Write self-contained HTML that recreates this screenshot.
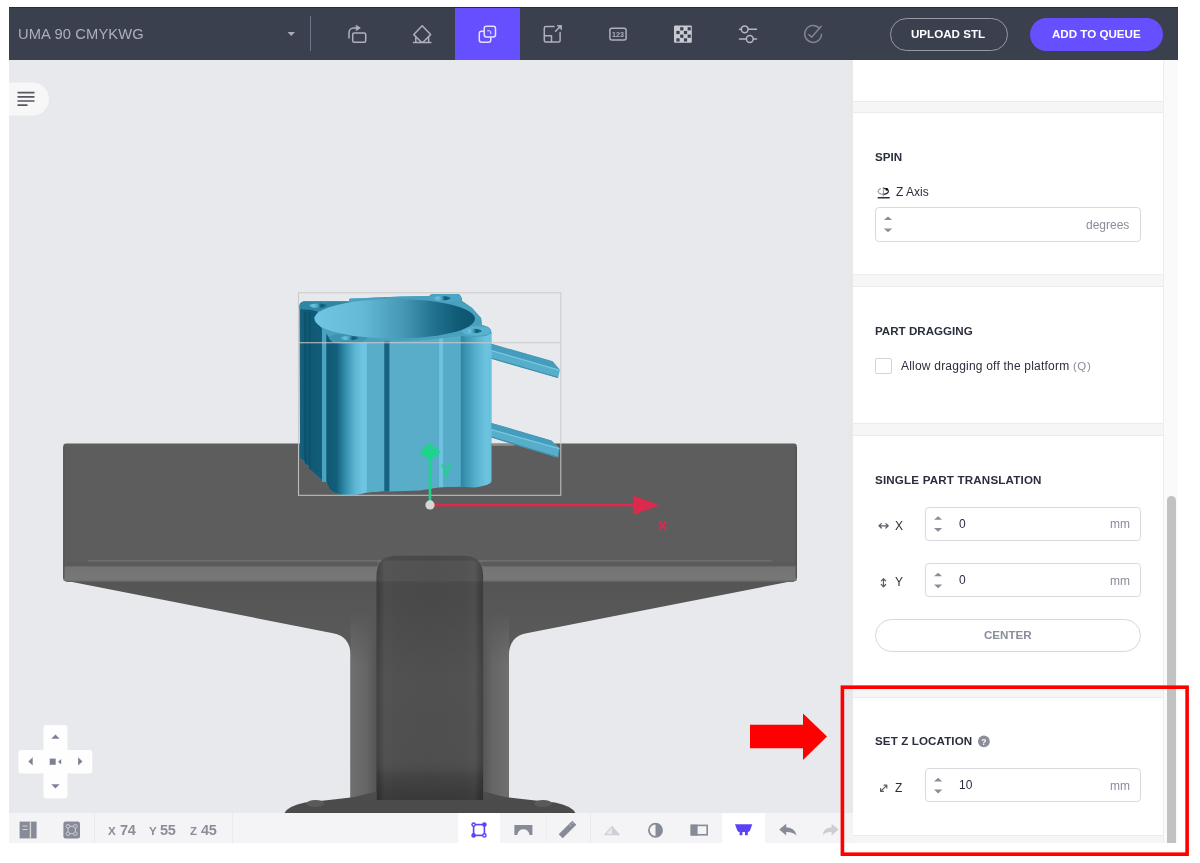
<!DOCTYPE html>
<html><head><meta charset="utf-8">
<style>
*{box-sizing:border-box;margin:0;padding:0}
html,body{width:1200px;height:863px;background:#fff;overflow:hidden}
body{position:relative;font-family:"Liberation Sans",sans-serif;}
.abs{position:absolute}
#topbar{left:9px;top:7px;width:1168.5px;height:53.300px;background:#3b404e}
#viewport{left:9px;top:60px;width:844px;height:753px;background:#e8e9ed;overflow:hidden}
#panel{left:853px;top:60px;width:310px;height:783px;background:#fff;overflow:hidden}
#strack{left:1163px;top:60px;width:14.5px;height:783px;background:#fafafa;border-left:1px solid #ededed}
#sthumb{left:1167px;top:496px;width:8.5px;height:347px;background:#c2c2c2;border-radius:4.5px 4.5px 0 0}
#toolbar{left:9px;top:813px;width:844px;height:30px;background:#f4f4f6}
.gap{position:absolute;left:0;width:310px;background:#f6f6f7;border-top:1px solid #ebebed;border-bottom:1px solid #ebebed}
.h{position:absolute;left:22px;font-weight:bold;font-size:11.6px;color:#2b2f3d;white-space:nowrap;line-height:14px}
.t{position:absolute;font-size:12px;color:#2b2f3d;white-space:nowrap;line-height:14px}
.g{color:#8a8d9a}
.inp{position:absolute;border:1px solid #d9dadf;border-radius:4px;background:#fff}
.tt{position:absolute;white-space:nowrap;line-height:14px}
.tt,.t,.h{will-change:transform}
</style></head><body>
<div id="topbar" class="abs">
<div class="abs" style="left:0;top:0;width:1168.5px;height:1px;background:#2a2d3a"></div>
<div class="abs" style="left:446px;top:1px;width:65px;height:52px;background:#664fff"></div>
<div class="tt" id="title" style="left:8.500px;top:18.400px;font-size:14.700px;line-height:18px;color:#adb0bb;letter-spacing:0.140px">UMA 90 CMYKWG</div>
<div class="abs" style="left:300.5px;top:9px;width:1px;height:35px;background:#70748a"></div>
<div class="abs" style="left:881px;top:11px;width:118px;height:33px;border:1px solid #9699a6;border-radius:17px"></div>
<div class="tt" id="upl" style="left:902.300px;top:19.700px;font-size:11.6px;font-weight:bold;color:#fff">UPLOAD STL</div>
<div class="abs" style="left:1021px;top:11px;width:133px;height:33px;background:#664fff;border-radius:17px"></div>
<div class="tt" id="addq" style="left:1042.500px;top:19.700px;font-size:11.6px;font-weight:bold;color:#fff">ADD TO QUEUE</div>
</div>
<svg class="abs" style="left:0;top:0" width="1200" height="70" viewBox="0 0 1200 70" fill="none" stroke-linecap="round" stroke-linejoin="round">
<path d="M287.5 32h7.5l-3.75 4z" fill="#a9acb8"/>
<g stroke="#aeb1bc" stroke-width="1.5">
<rect x="352.7" y="32.9" width="13" height="9.4" rx="1.5"/>
<path d="M349 38v-5.5a4.6 4.600 0 0 1 4.600-4.600h3"/>
<path d="M356.500 25.400l3.800 2.500l-3.800 2.500z" fill="#aeb1bc" stroke-width="0.800"/>
<path d="M422.200 25.800l8.400 8.800l-7.600 7.600h-1.600l-7.600-7.600z"/>
<path d="M413.500 42.500h17.400M415.800 37.200v5M428.600 37.200v5"/>
</g>
<g stroke="#e6e2ff" stroke-width="1.5">
<rect x="479.300" y="31.200" width="11.500" height="11" rx="2.200"/>
<rect x="484.200" y="26.200" width="11.300" height="10.800" rx="2.200" fill="#664fff"/>
<path d="M487.500 30.800h2.200M490.700 31.600v2.200" stroke-width="1.100"/>
</g>
<g stroke="#aeb1bc" stroke-width="1.500">
<path d="M554 26.500h-8.200a1.500 1.500 0 0 0-1.500 1.500v12.500a1.500 1.500 0 0 0 1.500 1.500h12.800a1.500 1.500 0 0 0 1.500-1.500v-8"/>
<path d="M544.500 35.800h7v6"/>
<path d="M555.500 31.300l5.500-5.500"/>
<path d="M557.500 25.500h4v4z" fill="#aeb1bc" stroke-width="0.800"/>
<rect x="609.900" y="28.300" width="16.200" height="11.600" rx="2"/>
</g>
<text x="618" y="36.800" font-family="Liberation Sans" font-weight="bold" font-size="7.200" fill="#aeb1bc" text-anchor="middle">123</text>
<rect x="674" y="25.500" width="17.800" height="17.200" rx="1" fill="#c9cbd2"/>
<g fill="#3b404e">
<rect x="680.200" y="27.200" width="3.200" height="3.200"/><rect x="687.600" y="27.200" width="3.200" height="3.200"/>
<rect x="676.400" y="30.900" width="3.200" height="3.200"/><rect x="683.900" y="30.900" width="3.200" height="3.200"/>
<rect x="680.200" y="34.600" width="3.200" height="3.200"/><rect x="687.600" y="34.600" width="3.200" height="3.200"/>
<rect x="676.400" y="38.300" width="3.200" height="3.200"/><rect x="683.900" y="38.300" width="3.200" height="3.200"/>
</g>
<g stroke="#b4b7c2" stroke-width="1.500">
<path d="M739.500 29.300h1.700M748.200 29.300h8.300M739.500 39h6.800M753.300 39h3.200"/>
<circle cx="744.700" cy="29.300" r="3.400"/><circle cx="749.800" cy="39" r="3.400"/>
</g>
<g stroke="#7f8392" stroke-width="1.500">
<path d="M819.500 28.500a8.400 8.400 0 1 0 2 5.700" />
<path d="M809 34.600l2.600 2.600l9.600-11"/>
</g>
</svg>
<div id="viewport" class="abs"></div>
<svg id="scene" class="abs" style="left:0;top:0" width="1200" height="863" viewBox="0 0 1200 863">
<defs>
<clipPath id="vpclip"><rect x="9" y="60" width="844" height="753"/></clipPath>
<linearGradient id="gcol" gradientUnits="userSpaceOnUse" x1="350" y1="0" x2="509" y2="0">
<stop offset="0" stop-color="#6f6f6f"/><stop offset="0.100" stop-color="#666"/><stop offset="0.170" stop-color="#545454"/><stop offset="0.830" stop-color="#545454"/><stop offset="0.900" stop-color="#666"/><stop offset="1" stop-color="#6f6f6f"/>
</linearGradient>
<linearGradient id="gfade" gradientUnits="userSpaceOnUse" x1="0" y1="612" x2="0" y2="665">
<stop offset="0" stop-color="#fff" stop-opacity="0"/><stop offset="1" stop-color="#fff" stop-opacity="1"/>
</linearGradient>
<mask id="mfade" maskUnits="userSpaceOnUse" x="340" y="600" width="180" height="220"><rect x="340" y="600" width="180" height="220" fill="url(#gfade)"/></mask>
<linearGradient id="ginner" gradientUnits="userSpaceOnUse" x1="376.500" y1="0" x2="483.100" y2="0">
<stop offset="0" stop-color="#3b3b3b"/><stop offset="0.030" stop-color="#404040"/><stop offset="0.080" stop-color="#4d4d4d"/><stop offset="0.200" stop-color="#4a4a4a"/><stop offset="0.500" stop-color="#494949"/><stop offset="0.800" stop-color="#4a4a4a"/><stop offset="0.920" stop-color="#4d4d4d"/><stop offset="0.970" stop-color="#404040"/><stop offset="1" stop-color="#3b3b3b"/>
</linearGradient>
<linearGradient id="gvin" gradientUnits="userSpaceOnUse" x1="0" y1="600" x2="0" y2="800">
<stop offset="0" stop-color="#fff" stop-opacity="0"/><stop offset="0.400" stop-color="#fff" stop-opacity="0.040"/><stop offset="0.780" stop-color="#fff" stop-opacity="0.030"/><stop offset="0.880" stop-color="#000" stop-opacity="0.080"/><stop offset="0.985" stop-color="#000" stop-opacity="0.220"/><stop offset="1" stop-color="#000" stop-opacity="0.220"/>
</linearGradient>
<linearGradient id="glip" gradientUnits="userSpaceOnUse" x1="0" y1="565.500" x2="0" y2="582.200">
<stop offset="0" stop-color="#5c5c5c"/><stop offset="0.110" stop-color="#747475"/><stop offset="0.850" stop-color="#777777"/><stop offset="0.950" stop-color="#686868"/><stop offset="1" stop-color="#585858"/>
</linearGradient>
<linearGradient id="gwing" gradientUnits="userSpaceOnUse" x1="0" y1="582" x2="0" y2="650">
<stop offset="0" stop-color="#555"/><stop offset="1" stop-color="#5a5a5a"/>
</linearGradient>
<linearGradient id="gC" gradientUnits="userSpaceOnUse" x1="326.300" y1="0" x2="367" y2="0">
<stop offset="0" stop-color="#0f5873"/><stop offset="0.250" stop-color="#125f7b"/><stop offset="0.450" stop-color="#2f8aa8"/><stop offset="0.700" stop-color="#5cb5d2"/><stop offset="0.920" stop-color="#70c7e3"/><stop offset="1" stop-color="#6bc1dd"/>
</linearGradient>
<linearGradient id="gI" gradientUnits="userSpaceOnUse" x1="460.800" y1="0" x2="491.400" y2="0">
<stop offset="0" stop-color="#2c84a3"/><stop offset="0.150" stop-color="#3a93b1"/><stop offset="0.500" stop-color="#57b0cd"/><stop offset="0.850" stop-color="#6dc4e0"/><stop offset="1" stop-color="#68bfdb"/>
</linearGradient>
<linearGradient id="gA" gradientUnits="userSpaceOnUse" x1="299.600" y1="0" x2="322" y2="0">
<stop offset="0" stop-color="#17627e"/><stop offset="0.300" stop-color="#0f5872"/><stop offset="1" stop-color="#125d79"/>
</linearGradient>
<linearGradient id="gE" gradientUnits="userSpaceOnUse" x1="314.500" y1="0" x2="475" y2="0">
<stop offset="0" stop-color="#70c7e3"/><stop offset="0.300" stop-color="#63b9d6"/><stop offset="0.550" stop-color="#4698b5"/><stop offset="0.750" stop-color="#21718e"/><stop offset="0.900" stop-color="#0f5a75"/><stop offset="1" stop-color="#0d5570"/>
</linearGradient>
<linearGradient id="gH" gradientUnits="userSpaceOnUse" x1="309.2" y1="0" x2="326.8" y2="0"><stop offset="0" stop-color="#4fa8c6"/><stop offset="0.250" stop-color="#6cc4e0"/><stop offset="0.480" stop-color="#4b9fbd"/><stop offset="0.680" stop-color="#0f5a75"/><stop offset="1" stop-color="#1f7390"/></linearGradient>
<linearGradient id="gH2" gradientUnits="userSpaceOnUse" x1="340.5" y1="0" x2="358.5" y2="0"><stop offset="0" stop-color="#4fa8c6"/><stop offset="0.250" stop-color="#6cc4e0"/><stop offset="0.480" stop-color="#4b9fbd"/><stop offset="0.680" stop-color="#0f5a75"/><stop offset="1" stop-color="#1f7390"/></linearGradient>
<linearGradient id="gH3" gradientUnits="userSpaceOnUse" x1="465.2" y1="0" x2="481.8" y2="0"><stop offset="0" stop-color="#4fa8c6"/><stop offset="0.250" stop-color="#6cc4e0"/><stop offset="0.480" stop-color="#4b9fbd"/><stop offset="0.680" stop-color="#0f5a75"/><stop offset="1" stop-color="#1f7390"/></linearGradient>
<linearGradient id="gH4" gradientUnits="userSpaceOnUse" x1="433.3" y1="0" x2="450.7" y2="0"><stop offset="0" stop-color="#4fa8c6"/><stop offset="0.250" stop-color="#6cc4e0"/><stop offset="0.480" stop-color="#4b9fbd"/><stop offset="0.680" stop-color="#0f5a75"/><stop offset="1" stop-color="#1f7390"/></linearGradient>
<clipPath id="body"><path d="M299.600 305.500Q300 302 304 301.600L348.800 301.600L349.800 298.800L401 296.500L429 296L432 294L458 294Q461.500 295 462 301L472 308L481 318L482 325L488 327Q491.400 329 491.400 333V481.600Q490 485 476 487.300Q466 487.500 460.800 486.500L440 487.300L420 490.500L389.400 491.500L384 491L367 492.400Q358 494.900 347 494.900Q335 494.500 329.500 489.200L328.900 488L326.300 481.800H321.200V479.600L309.100 468.800V466L304.700 463.700V461.200L300 458.600z"/></clipPath>
</defs>
<g clip-path="url(#vpclip)">
<!-- platform -->
<path d="M64.500 580.500L333 633.200Q350.500 636.500 350.500 655V800H509V655Q509 636.500 526.500 633.200L795.600 580.500z" fill="url(#gwing)"/>
<rect x="350.500" y="600" width="158.500" height="215" fill="url(#gcol)" mask="url(#mfade)"/>
<path d="M350.500 797.500Q330 800 305 802.500Q288 806 284.500 813H575.500Q572 806 555 802.500Q530 800 509 797.500z" fill="#4b4b4b"/>
<ellipse cx="315.500" cy="803.500" rx="9" ry="3.500" fill="#5a5a5a"/><ellipse cx="543" cy="803.500" rx="9" ry="3.500" fill="#5a5a5a"/>
<path d="M63.200 446.400Q63.200 443.400 66.200 443.400H793.900Q796.900 443.400 796.900 446.400V578.500Q796.900 581 794.400 581.200L793 581.700H67L65.700 581.200Q63.200 581 63.200 578.500z" fill="#5d5d5d"/>
<rect x="63.200" y="562" width="733.700" height="3.600" fill="#5a5a5a"/><path d="M63.200 565.500H796.900V578.500Q796.900 581 794.400 581.200L793 581.700H67L65.700 581.200Q63.200 581 63.200 578.500z" fill="url(#glip)"/>
<rect x="87.500" y="560.100" width="684" height="1.600" fill="#6e6e6e"/>
<rect x="63.200" y="447" width="1.300" height="131" fill="#555"/><rect x="795.600" y="447" width="1.300" height="131" fill="#505050"/>
<path d="M376.500 575.800Q376.500 555.800 396.500 555.800H463.100Q483.100 555.800 483.100 575.800V800H376.500z" fill="url(#ginner)"/>
<rect x="376.500" y="600" width="106.600" height="200" fill="url(#gvin)"/>
<path d="M350.500 798L376.500 791.500V800H350.500zM509 798L483.100 791.500V800H509z" fill="#4c4c4c"/>
<rect x="377" y="560.600" width="105.600" height="21" fill="#fff" fill-opacity="0.050"/>
<!-- blue part -->
<g clip-path="url(#body)">
<rect x="295" y="290" width="200" height="210" fill="#59adc9"/>
<rect x="299" y="290" width="23.200" height="210" fill="url(#gA)"/>
<rect x="304.500" y="312" width="1.200" height="190" fill="#0c4f69"/><rect x="309" y="312" width="1.200" height="190" fill="#0c4f69"/><rect x="322" y="290" width="4.500" height="210" fill="#4ba3c1"/>
<rect x="326.300" y="290" width="40.800" height="210" fill="url(#gC)"/>
<rect x="367" y="290" width="17.400" height="210" fill="#58adc9"/>
<rect x="384.300" y="290" width="5.100" height="210" fill="#16627f"/>
<rect x="439.100" y="290" width="3.900" height="210" fill="#6dc3df"/>
<rect x="443" y="290" width="17.900" height="210" fill="#56abc8"/>
<rect x="460.800" y="290" width="31" height="210" fill="url(#gI)"/>
<path d="M299 290H492V333L486 336L470 337.500L462 336L440 338.500L420 340.500L395 341.500L367 342L360 343L345 343.500Q334 343 331 341L328 336L324 331L318 324L314 318L318 311.500L311 309.500L299 309z" fill="#4aa1be"/>
<path d="M299 301H349V304L330 307L318 311.500L311 309.500L299 309z" fill="#2f87a5"/>
<ellipse cx="348" cy="338" rx="19" ry="4.500" fill="#3c94b2"/>
<ellipse cx="476.500" cy="331" rx="14.500" ry="4.800" fill="#58b1ce"/>
<ellipse cx="446" cy="298" rx="16" ry="4.200" fill="#4da5c3"/>
</g>
<ellipse cx="394.750" cy="318.800" rx="80.250" ry="19.800" fill="url(#gE)"/>
<ellipse cx="318" cy="305.600" rx="8.800" ry="2.200" fill="url(#gH)" transform="translate(0 0)"/>
<ellipse cx="349.500" cy="338" rx="9" ry="2.100" fill="url(#gH2)"/>
<ellipse cx="473.500" cy="331" rx="8.300" ry="2.200" fill="url(#gH3)"/>
<ellipse cx="442" cy="298.300" rx="8.700" ry="2.200" fill="url(#gH4)"/>
<!-- fins -->
<rect x="491.400" y="444" width="23" height="1.800" fill="#8e8e8e"/>
<path d="M491.400 343.800L552.500 361.300L560 370L558 378L491.400 358.800z" fill="#58adc9"/>
<path d="M491.400 343.800L552.500 361.300L560 370L491.400 350.200z" fill="#469cba"/>
<path d="M491.400 350.600L559.800 370.400" stroke="#72c9e5" stroke-width="1.200" fill="none"/>
<path d="M491.400 358.300L558 377.500" stroke="#3a8fae" stroke-width="1.100" fill="none"/>
<path d="M491.400 422.900L551.300 440.500L559.500 448L558 457.800L491.400 437.500z" fill="#58adc9"/>
<path d="M491.400 422.900L551.300 440.500L559.500 448L491.400 429.300z" fill="#469cba"/>
<path d="M491.400 429.700L559.300 448.600" stroke="#72c9e5" stroke-width="1.200" fill="none"/>
<path d="M491.400 437L558 457.300" stroke="#3a8fae" stroke-width="1.100" fill="none"/>
<!-- bbox -->
<g fill="none" stroke="#c9c9c9" stroke-width="1.100">
<rect x="298.500" y="292.800" width="262.300" height="202.500" stroke-opacity="0.900"/>
<path d="M298.500 342.800H560.800"/>
</g>
<!-- axes -->
<rect x="433" y="503.900" width="202" height="2.500" fill="#dc2a4c"/>
<path d="M633.300 495.600L659.500 505.200L633.300 514.800z" fill="#dc2a4c"/>
<path d="M658.800 521.200l7.400 8.800M666.200 521.200l-7.400 8.800" stroke="#dc2a4c" stroke-width="2" fill="none"/>
<rect x="428.700" y="458" width="2.600" height="44" fill="#1fd38c"/>
<path d="M430 442.700L440.600 452L430 461.300L419.400 452z" fill="#1fd38c"/>
<path d="M442 464.500L446.200 472.200M450 464.500L445.200 477.500" stroke="#1fd38c" stroke-width="2.400" fill="none"/>
<circle cx="430" cy="504.900" r="4.600" fill="#d6d6d6"/>
</g>
</svg>
<div id="toolbar" class="abs">
<div class="abs" style="left:448.600px;top:0;width:42.800px;height:30px;background:#fff"></div>
<div class="abs" style="left:713.200px;top:0;width:42.800px;height:30px;background:#fff"></div>
<div class="abs" style="left:85px;top:0;width:1px;height:30px;background:#eaeaec"></div>
<div class="abs" style="left:222.600px;top:0;width:1px;height:30px;background:#eaeaec"></div>
<div class="abs" style="left:537px;top:0;width:1px;height:30px;background:#ededef"></div>
<div class="abs" style="left:581px;top:0;width:1px;height:30px;background:#eaeaec"></div>
<div class="tt g" id="cx" style="left:98.900px;top:11px;font-weight:bold;font-size:11.600px;line-height:14px">X</div>
<div class="tt g" id="c74" style="left:110.800px;top:8.800px;font-weight:bold;font-size:14.500px;line-height:17px;letter-spacing:-0.400px">74</div>
<div class="tt g" id="cy" style="left:139.900px;top:11px;font-weight:bold;font-size:11.600px;line-height:14px">Y</div>
<div class="tt g" id="c55" style="left:151.200px;top:8.800px;font-weight:bold;font-size:14.500px;line-height:17px;letter-spacing:-0.400px">55</div>
<div class="tt g" id="cz" style="left:181.300px;top:11px;font-weight:bold;font-size:11.600px;line-height:14px">Z</div>
<div class="tt g" id="c45" style="left:192px;top:8.800px;font-weight:bold;font-size:14.500px;line-height:17px;letter-spacing:-0.400px">45</div>
</div>
<svg id="tbi" class="abs" style="left:0;top:0" width="1200" height="863" viewBox="0 0 1200 863" fill="none">
<rect x="19.600" y="821.600" width="17" height="16.800" fill="#878a97"/>
<path d="M30.400 821.600v16.800" stroke="#d4d5da" stroke-width="1.400"/>
<path d="M22.500 826h5M22.500 829.500h5" stroke="#d4d5da" stroke-width="1.200"/>
<rect x="63.400" y="821.600" width="16.600" height="16.800" rx="2.200" fill="#878a97"/>
<g stroke="#d4d5da" stroke-width="0.900"><circle cx="68" cy="826.300" r="1.800"/><circle cx="75.400" cy="826.300" r="1.800"/><circle cx="68" cy="833.700" r="1.800"/><circle cx="75.400" cy="833.700" r="1.800"/><path d="M69.800 826.300h3.800M69.800 833.700h3.800M68 828.100v3.800M75.400 828.100v3.800"/></g>
<g stroke="#5b43f5" stroke-width="1.600"><rect x="473.600" y="824.600" width="10.800" height="10.800"/></g>
<g fill="#5b43f5"><circle cx="473.600" cy="824.600" r="2.300"/><circle cx="484.400" cy="824.600" r="2.300"/><circle cx="473.600" cy="835.400" r="2.300"/><circle cx="484.400" cy="835.400" r="2.300"/></g>
<circle cx="473.600" cy="824.600" r="0.900" fill="#fff"/><circle cx="484.400" cy="835.400" r="0.900" fill="#fff"/>
<path d="M514.400 825H532.400V835H529.600Q528.500 829.300 523.400 829.300Q518.300 829.300 517.200 835H514.400z" fill="#878a97"/>
<path d="M558.700 834.300L572.300 820.700L576.300 824.700L562.700 838.300z" fill="#878a97"/><path d="M569.300 824.400l1.600 1.600M571.600 822.200l1.600 1.600" stroke="#d4d5da" stroke-width="0.800"/>
<path d="M612 826.600L619.200 834.600H604.800z" fill="#e9e9ec" stroke="#cfd0d6" stroke-width="1.200" stroke-linejoin="round"/>
<path d="M612 826.600L619.200 834.600H612z" fill="#cfd0d6"/>
<circle cx="655.500" cy="830.200" r="6.600" stroke="#878a97" stroke-width="1.700"/>
<path d="M655.500 823.600A6.600 6.600 0 0 1 655.500 836.800z" fill="#878a97"/>
<rect x="691.400" y="825.400" width="15.800" height="9.400" stroke="#878a97" stroke-width="1.600"/>
<rect x="690.600" y="824.600" width="7" height="11" fill="#878a97"/>
<path d="M735 824.300H752.300L750 830.500Q749.300 832 747.500 832H739.800Q738 832 737.300 830.500z" fill="#5b43f5"/>
<rect x="739.600" y="831.500" width="2.800" height="3.700" fill="#5b43f5"/><rect x="745" y="831.500" width="2.800" height="3.700" fill="#5b43f5"/>
<path d="M779.200 829.600L786.200 823.800V827.300Q794.800 827.600 796.700 835.700Q793 831.800 786.200 832V835.500z" fill="#878a97"/>
<path d="M838.600 829.600L831.600 823.800V827.300Q823 827.600 822.800 835.700Q824.800 831.800 831.600 832V835.500z" fill="#cdced4"/>
</svg>
<svg id="ui" class="abs" style="left:0;top:0" width="1200" height="863" viewBox="0 0 1200 863" fill="none">
<!-- hamburger -->
<path d="M9 82.500H32.500A16.500 16.500 0 0 1 32.500 115.500H9z" fill="#f7f7f8"/>
<g stroke="#55585f" stroke-width="1.700"><path d="M17.500 92.600H34.500M17.500 96.800H34.500M17.500 101H34.500M17.500 105.200H27.500"/></g>
<!-- dpad -->
<rect x="43.500" y="724.900" width="23.900" height="73.500" rx="3" fill="#fefefe"/>
<rect x="18.400" y="749.900" width="73.900" height="23.500" rx="3" fill="#fefefe"/>
<g fill="#7e8193">
<path d="M51.300 738.800l4.150-4.200l4.150 4.200z"/><path d="M51.300 784.300l4.150 4.200l4.150-4.200z"/>
<path d="M32.700 757.200l-4.400 4.200l4.400 4.200z"/><path d="M78.100 757.200l4.400 4.200l-4.400 4.200z"/>
<rect x="49.700" y="758.600" width="6" height="6.200"/><path d="M61.200 758.900l-3.200 2.800l3.200 2.800z"/>
</g>
<!-- red arrow -->
<path d="M750 724.800H803V713.500L827 736.600L803 760V748.200H750z" fill="#fe0000"/>
</svg>
<div class="abs" style="left:848px;top:60.300px;width:5px;height:752.700px;background:#e8e8ea"></div>
<div id="panel" class="abs">
<div class="gap" style="top:40.5px;height:12.5px"></div>
<div class="gap" style="top:214.3px;height:12.5px"></div>
<div class="gap" style="top:362.9px;height:13.1px"></div>
<div class="gap" style="top:625px;height:12.6px"></div>
<div class="gap" style="top:775.2px;height:12px"></div>
<div class="h" id="h1" style="top:90.4px">SPIN</div>
<div class="t" id="zaxis" style="left:42.6px;top:124.5px">Z Axis</div>
<div class="inp" style="left:22px;top:147.300px;width:265.700px;height:34.300px"></div>
<div class="t g" id="deg" style="right:33.500px;top:157.800px">degrees</div>
<div class="h" id="h2" style="top:264px">PART DRAGGING</div>
<div class="abs" style="left:22.200px;top:298px;width:16.400px;height:16.400px;border:1px solid #d3d4d9;border-radius:2px"></div>
<div class="t" id="allow" style="left:48.400px;top:299.300px;letter-spacing:0.210px">Allow dragging off the platform <span class="g" id="q" style="font-size:11.500px;letter-spacing:0.600px">(Q)</span></div>
<div class="h" id="h3" style="top:412.700px;letter-spacing:0.180px">SINGLE PART TRANSLATION</div>
<div class="t" id="lx" style="left:42px;top:458.600px">X</div>
<div class="inp" style="left:72px;top:446.750px;width:215.500px;height:33.750px"></div>
<div class="t" id="vx" style="left:105.700px;top:456.500px">0</div>
<div class="t g" id="mmx" style="right:33px;top:457.400px">mm</div>
<div class="t" id="ly" style="left:42px;top:514.900px">Y</div>
<div class="inp" style="left:72px;top:503.250px;width:215.500px;height:33.750px"></div>
<div class="t" id="vy" style="left:105.700px;top:513.000px">0</div>
<div class="t g" id="mmy" style="right:33px;top:513.900px">mm</div>
<div class="abs" style="left:22.100px;top:559.400px;width:265.500px;height:32.400px;border:1px solid #d6d7dc;border-radius:17px"></div>
<div class="tt g" id="center" style="left:131px;top:567.700px;font-weight:bold;font-size:11.600px">CENTER</div>
<div class="h" id="h4" style="top:674px;letter-spacing:0.110px">SET Z LOCATION</div>
<div class="t" id="lz" style="left:42px;top:720.500px">Z</div>
<div class="inp" style="left:72px;top:708.400px;width:215.500px;height:34px"></div>
<div class="t" id="vz" style="left:105.700px;top:718.100px">10</div>
<div class="t g" id="mmz" style="right:33px;top:718.600px">mm</div>
</div>
<svg class="abs" style="left:0;top:0" width="1200" height="863" viewBox="0 0 1200 863" fill="none">
<g fill="#8a8c9c"><path d="M883.9 220.1l4.100-3.600l4.100 3.600z"/><path d="M883.9 228.5l4.100 3.800l4.100-3.800z"/><path d="M934.0 519.8l4.100-3.600l4.100 3.600z"/><path d="M934.0 528.0l4.100 3.800l4.100-3.800z"/><path d="M934.0 576.3l4.100-3.600l4.100 3.600z"/><path d="M934.0 584.5l4.100 3.800l4.100-3.800z"/><path d="M934.0 781.4l4.100-3.600l4.100 3.600z"/><path d="M934.0 789.6l4.100 3.800l4.100-3.800z"/></g>
<g stroke="#4a4d58" stroke-width="1.200" fill="none" stroke-linecap="round" stroke-linejoin="round">
<path d="M878.200 197.700H889.200" stroke-width="1.400" stroke="#2b2f3d"/>
<path d="M883.400 188.300A5 3 0 0 1 883.400 194.300" stroke="#2b2f3d" stroke-width="1.300"/>
<path d="M883.400 194.300A5 3 0 0 1 881 188.600" stroke="#8a8d9a" stroke-dasharray="1.500 1.300"/>
<path d="M883.400 187.500V196" stroke="#8a8d9a" stroke-width="1" stroke-dasharray="1.500 1"/>
<circle cx="886.800" cy="189.400" r="1.300" fill="#111" stroke="none"/>
<path d="M880.200 525.800H887M881.300 523.600L879 525.800L881.300 528M885.900 523.600L888.200 525.800L885.900 528" stroke="#5a5d68"/>
<path d="M883.500 579.800V585.600M881.300 580.900L883.500 578.600L885.700 580.900M881.300 584.500L883.500 586.800L885.700 584.500" stroke="#5a5d68"/>
<path d="M881.200 790.800L886.200 785.800M880.600 788.600V791.400H883.400M884 785.200H886.800V788" stroke="#5a5d68"/>
</g>
<circle cx="983.900" cy="741.400" r="5.900" fill="#8a8d9a"/>
<text x="983.900" y="744.600" font-family="Liberation Sans" font-weight="bold" font-size="8.500" fill="#fff" text-anchor="middle">?</text>
</svg>
<div id="strack" class="abs"></div>
<div id="sthumb" class="abs"></div>
<svg id="redbox" class="abs" style="left:0;top:0" width="1200" height="863" viewBox="0 0 1200 863"><rect x="842.400" y="687.200" width="344.700" height="167" fill="none" stroke="#ff0000" stroke-width="3.600"/></svg>
</body></html>
